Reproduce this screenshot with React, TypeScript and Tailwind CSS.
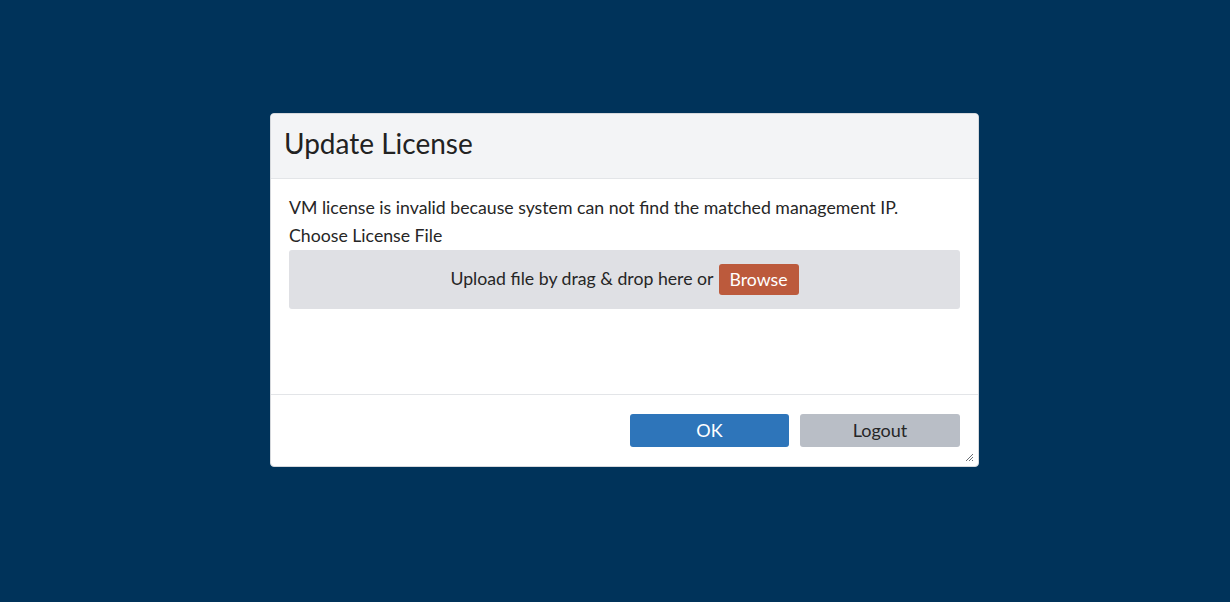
import React from 'react';

const App: React.FC = () => {
  return (
    <div
      className="w-[1230px] h-[602px] bg-[#00335a] pt-[113px] pl-[270px]"
      style={{ fontFamily: 'Lato, "Open Sans", sans-serif' }}
    >
      <div className="relative w-[709px] h-[354px] bg-white rounded-[4px] border border-[#d5d8dc] flex flex-col overflow-hidden">
        {/* Header */}
        <div className="h-[65px] shrink-0 bg-[#f3f4f6] border-b border-[#e3e5e8] flex items-center px-[13px]">
          <h1 className="text-[28px] text-[#222] leading-none pb-[6px]">Update License</h1>
        </div>

        {/* Body */}
        <div className="flex-1 px-[18px] pt-[15px]">
          <p className="text-[17.7px] leading-[28px] text-[#262626]">
            VM license is invalid because system can not find the matched management IP.
          </p>
          <p className="text-[17.7px] leading-[28px] text-[#262626]">Choose License File</p>
          <div className="h-[59px] rounded-[3px] bg-[#dfe0e4] flex items-center justify-center gap-[5px]">
            <span className="text-[17.7px] text-[#262626]">Upload file by drag &amp; drop here or</span>
            <button className="h-[31px] px-[11px] rounded-[3px] bg-[#bc5a3c] text-white text-[17.7px] leading-none">
              Browse
            </button>
          </div>
        </div>

        {/* Footer */}
        <div className="h-[72px] shrink-0 border-t border-[#e3e5e8] flex justify-end gap-[11px] pr-[18px] pt-[19px]">
          <button className="w-[159px] h-[33px] rounded-[3px] bg-[#2e75ba] text-white text-[18px]">OK</button>
          <button className="w-[160px] h-[33px] rounded-[3px] bg-[#b9bec6] text-[#262626] text-[18px]">Logout</button>
        </div>

        <svg className="absolute right-[5px] bottom-[5px]" width="8" height="8" viewBox="0 0 8 8">
          <path d="M8 1 L1 8 M8 4 L4 8 M8 7 L7 8" stroke="#6b6f75" strokeWidth="1" />
        </svg>
      </div>
    </div>
  );
};

export default App;
